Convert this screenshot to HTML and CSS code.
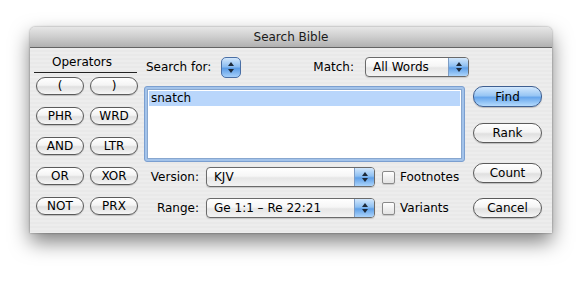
FILE: index.html
```html
<!DOCTYPE html>
<html>
<head>
<meta charset="utf-8">
<link rel="stylesheet" href="styles.css">
</head>
<body>
<div class="window">
  <div class="titlebar">Search Bible</div>
  <div class="content">
    <div class="ops">
      <div class="ops-head"><span>Operators</span></div>
      <div class="ops-grid">
        <button class="btn">(</button>
        <button class="btn">)</button>
        <button class="btn">PHR</button>
        <button class="btn">WRD</button>
        <button class="btn">AND</button>
        <button class="btn">LTR</button>
        <button class="btn">OR</button>
        <button class="btn">XOR</button>
        <button class="btn">NOT</button>
        <button class="btn">PRX</button>
      </div>
    </div>
    <div class="main">
      <div class="row1">
        <span class="label">Search for:</span>
        <span class="stepper">
          <svg width="20" height="21" viewBox="0 0 20 21">
            <defs>
              <linearGradient id="sg" x1="0" y1="0" x2="0" y2="1">
                <stop offset="0" stop-color="#d6e9fc"/>
                <stop offset="0.45" stop-color="#8cbdf1"/>
                <stop offset="0.55" stop-color="#5d9de6"/>
                <stop offset="1" stop-color="#a9d2fb"/>
              </linearGradient>
            </defs>
            <rect x="0.5" y="0.5" width="19" height="20" rx="4.5" fill="url(#sg)" stroke="#4a6fa5"/>
            <path d="M7 9 L10 5 L13 9 Z" fill="#1d2a3a"/>
            <path d="M7 12 L10 16 L13 12 Z" fill="#1d2a3a"/>
          </svg>
        </span>
        <span class="label match-label">Match:</span>
        <span class="popup match-popup">
          <span class="popup-text">All Words</span>
          <span class="popup-arrows">
            <svg width="8" height="12" viewBox="0 0 8 12"><path d="M1 5 L4 1 L7 5 Z" fill="#1d2a3a"/><path d="M1 7 L4 11 L7 7 Z" fill="#1d2a3a"/></svg>
          </span>
        </span>
      </div>
      <div class="textarea">
        <div class="textarea-inner">
          <div class="sel">snatch</div>
        </div>
      </div>
      <div class="opt-row first">
        <span class="opt-label">Version:</span>
        <span class="popup wide-popup">
          <span class="popup-text">KJV</span>
          <span class="popup-arrows">
            <svg width="8" height="12" viewBox="0 0 8 12"><path d="M1 5 L4 1 L7 5 Z" fill="#1d2a3a"/><path d="M1 7 L4 11 L7 7 Z" fill="#1d2a3a"/></svg>
          </span>
        </span>
        <span class="check"></span>
        <span class="check-label">Footnotes</span>
      </div>
      <div class="opt-row second">
        <span class="opt-label">Range:</span>
        <span class="popup wide-popup">
          <span class="popup-text">Ge 1:1 – Re 22:21</span>
          <span class="popup-arrows">
            <svg width="8" height="12" viewBox="0 0 8 12"><path d="M1 5 L4 1 L7 5 Z" fill="#1d2a3a"/><path d="M1 7 L4 11 L7 7 Z" fill="#1d2a3a"/></svg>
          </span>
        </span>
        <span class="check"></span>
        <span class="check-label">Variants</span>
      </div>
    </div>
    <div class="actions">
      <button class="btn act default">Find</button>
      <button class="btn act rank">Rank</button>
      <button class="btn act count">Count</button>
      <button class="btn act cancel">Cancel</button>
    </div>
  </div>
</div>
</body>
</html>
```
FILE: styles.css
```css
html, body {
  margin: 0;
  padding: 0;
  background: #ffffff;
}
body {
  font-family: "DejaVu Sans", "Liberation Sans", sans-serif;
  font-size: 12px;
  color: #000;
  padding-top: 27px;
  padding-left: 30px;
  height: 286px;
  box-sizing: border-box;
}
.window {
  width: 522px;
  height: 206px;
  background: #ececec;
  border-radius: 5px 5px 0 0;
  box-shadow: 0 9px 20px rgba(0,0,0,0.5), 0 0 2px rgba(0,0,0,0.45);
}
.titlebar {
  height: 20px;
  line-height: 20px;
  text-align: center;
  color: #1a1a1a;
  border-radius: 5px 5px 0 0;
  background: linear-gradient(#e6e6e6, #cdcdcd 50%, #b0b0b0);
  border-bottom: 1px solid #636363;
}
.content {
  display: flex;
  height: 185px;
  padding-left: 4px;
  background: repeating-linear-gradient(#ededed 0, #ededed 2px, #e9e9e9 2px, #e9e9e9 4px);
}
.ops {
  width: 104px;
  padding-top: 6px;
}
.ops-head {
  height: 18px;
  line-height: 17px;
  text-align: center;
  padding-right: 7px;
  border-bottom: 1px solid #222;
  margin-right: 1px;
}
.ops-grid {
  display: grid;
  grid-template-columns: 48px 48px;
  grid-auto-rows: 18px;
  column-gap: 6px;
  row-gap: 12px;
  padding-left: 2px;
  margin-top: 4px;
}
.btn {
  font-family: "DejaVu Sans", "Liberation Sans", sans-serif;
  font-size: 12px;
  color: #000;
  height: 18px;
  padding: 0;
  line-height: 16px;
  border: 1px solid #5a5a5a;
  border-radius: 9px;
  background: linear-gradient(#ffffff, #f4f4f4 45%, #e0e0e0 55%, #f6f6f6);
  box-shadow: 0 1px 1px rgba(0,0,0,0.2);
}
.main {
  width: 325px;
  margin-left: 6px;
  padding-top: 9px;
}
.row1 {
  display: flex;
  align-items: center;
  height: 20px;
}
.label {
  line-height: 20px;
}
.row1 .label:first-child {
  margin-left: 2px;
}
.stepper {
  display: flex;
  margin-left: 10px;
  height: 21px;
}
.match-label {
  margin-left: auto;
  margin-right: 11px;
}
.popup {
  display: flex;
  height: 20px;
  box-sizing: border-box;
  border: 1px solid #6a6a6a;
  border-radius: 4px;
  background: linear-gradient(#ffffff, #f6f6f6 45%, #e6e6e6 55%, #f3f3f3);
  box-shadow: 0 1px 1px rgba(0,0,0,0.15);
  overflow: hidden;
}
.popup-text {
  flex: 1;
  padding-left: 7px;
  line-height: 18px;
  white-space: nowrap;
}
.popup-arrows {
  width: 19px;
  display: flex;
  align-items: center;
  justify-content: center;
  border-left: 1px solid #7d9cc4;
  background: linear-gradient(#d2e7fc, #8ec0f2 45%, #5fa0e8 55%, #acd4fb);
}
.match-popup {
  width: 104px;
}
.textarea {
  margin-top: 9px;
  width: 321px;
  height: 76px;
  box-sizing: border-box;
  padding: 2px;
  border: 1px solid #7b9fd0;
  border-radius: 3px;
  background: #a3c3ea;
}
.textarea-inner {
  height: 100%;
  box-sizing: border-box;
  background: #fff;
  border: 1px solid #88a7cf;
  padding: 1px;
}
.sel {
  height: 15px;
  line-height: 15px;
  padding-left: 2px;
  background: #b9d6fb;
}
.opt-row {
  display: flex;
  align-items: center;
  height: 20px;
}
.opt-row.first {
  margin-top: 5px;
}
.opt-row.second {
  margin-top: 11px;
}
.opt-label {
  width: 55px;
  text-align: right;
  margin-right: 7px;
}
.wide-popup {
  width: 169px;
}
.check {
  width: 13px;
  height: 13px;
  box-sizing: border-box;
  margin-left: 7px;
  border: 1px solid #8a8a8a;
  border-radius: 2px;
  background: linear-gradient(#ffffff, #f0f0f0 50%, #e4e4e4);
  box-shadow: 0 1px 1px rgba(0,0,0,0.15);
}
.check-label {
  margin-left: 5px;
}
.actions {
  display: flex;
  flex-direction: column;
  width: 69px;
  margin-left: 4px;
  padding-top: 38px;
}
.act {
  height: 20px;
  line-height: 18px;
  border-radius: 10px;
}
.act.default {
  height: 21px;
  border-color: #3f5f91;
  background: linear-gradient(#d3e8fd, #98c6f4 45%, #67a6ec 55%, #b5dbfd);
}
.act.rank {
  margin-top: 16px;
}
.act.count {
  margin-top: 20px;
}
.act.cancel {
  margin-top: 15px;
}
```
